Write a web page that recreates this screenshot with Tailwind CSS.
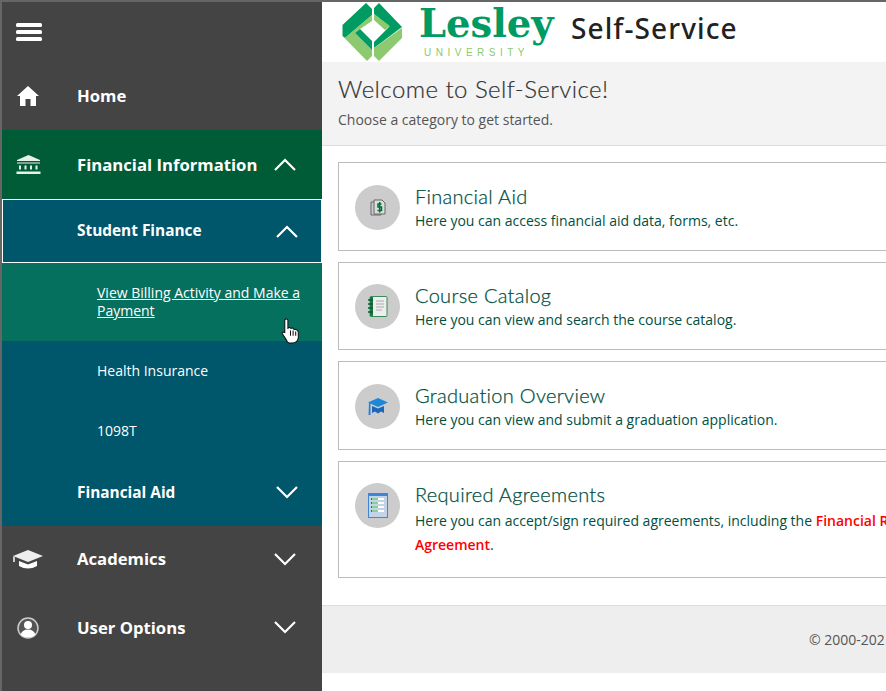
<!DOCTYPE html>
<html>
<head>
 <meta charset="UTF-8">
 <title>Self-Service</title>
 <script src="https://cdn.jsdelivr.net/npm/@tailwindcss/browser@4"></script>
</head>
<body class="font-['Open_Sans',sans-serif] bg-white">
<div class="relative flex w-[886px] h-[691px] overflow-hidden border-t-2 border-l-2 border-[#666]">

 <!-- sidebar -->
 <nav class="w-[320px] shrink-0 flex flex-col bg-[#444] text-white">
  <div class="h-[60px] flex items-center pl-[14px]">
   <svg width="26" height="20" viewBox="0 0 26 20" fill="#fff"><rect y="1" width="26" height="4" rx="1.5"/><rect y="8" width="26" height="4" rx="1.5"/><rect y="15" width="26" height="4" rx="1.5"/></svg>
  </div>
  <a class="h-[68px] flex items-center">
   <span class="w-[75px] pl-[15px]"><svg width="22" height="20" viewBox="0 0 22 20" fill="#fff"><path d="M11 0 L22 10 L19 10 L19 20 L13.5 20 L13.5 13 L8.5 13 L8.5 20 L3 20 L3 10 L0 10 Z"/></svg></span>
   <span class="font-bold text-[16.7px]">Home</span>
  </a>
  <a class="h-[69px] flex items-center bg-[#005c36]">
   <span class="w-[75px] pl-[14px]"><svg width="25" height="20" viewBox="0 0 25 20" fill="#e8f0ea"><path d="M12.5 0 L24 5 L24 6 L1 6 L1 5 Z"/><rect x="1" y="7.500" width="23" height="1"/><rect x="3" y="10.500" width="2" height="4"/><rect x="8.500" y="10.500" width="2" height="4"/><rect x="14" y="10.500" width="2" height="4"/><rect x="19.500" y="10.500" width="2" height="4"/><rect x="0.500" y="16.500" width="24" height="2.500"/></svg></span>
   <span class="font-bold text-[16.7px] flex-1">Financial Information</span>
   <svg class="mr-[26px]" width="22" height="13" viewBox="0 0 22 13" fill="none" stroke="#fff" stroke-width="2.2"><path d="M1 12 L11 2 L21 12"/></svg>
  </a>
  <div class="bg-[#00566a]">
   <a class="h-[64px] flex items-center border border-white pb-[1px]">
    <span class="font-bold text-[15.4px] pl-[74px] flex-1">Student Finance</span>
    <svg class="mr-[23px] mt-[1px]" width="22" height="13" viewBox="0 0 22 13" fill="none" stroke="#fff" stroke-width="2.2"><path d="M1 12 L11 2 L21 12"/></svg>
   </a>
   <a class="h-[78px] flex items-center bg-[#06705f] pl-[95px] pr-[20px] text-[14px] leading-[18px] underline">View Billing Activity and Make a Payment</a>
   <a class="h-[60px] flex items-center pl-[95px] text-[14px] pb-[2px]">Health Insurance</a>
   <a class="h-[60px] flex items-center pl-[95px] text-[14px] pb-[2px]">1098T</a>
   <a class="h-[65px] flex items-center pb-[2px]">
    <span class="font-bold text-[15.4px] pl-[75px] flex-1">Financial Aid</span>
    <svg class="mr-[24px]" width="22" height="13" viewBox="0 0 22 13" fill="none" stroke="#fff" stroke-width="2.2"><path d="M1 1 L11 11 L21 1"/></svg>
   </a>
  </div>
  <a class="h-[68px] flex items-center pb-[2px]">
   <span class="w-[75px] pl-[11px]"><svg width="30" height="19" viewBox="0 0 30 19" fill="#fff"><path d="M15 0 L30 6 L15 12 L0 6 Z" fill="#eee"/><path d="M6 11 L15 14.500 L24 11 L24 16 Q15 21 6 16 Z"/><path d="M0 6 L2 7 L2 12 L0 12 Z" fill="#ccc"/></svg></span>
   <span class="font-bold text-[16.7px] flex-1">Academics</span>
   <svg class="mr-[26px]" width="22" height="13" viewBox="0 0 22 13" fill="none" stroke="#fff" stroke-width="2.2"><path d="M1 1 L11 11 L21 1"/></svg>
  </a>
  <a class="h-[68px] flex items-center">
   <span class="w-[75px] pl-[15px]"><svg width="22" height="22" viewBox="0 0 22 22"><circle cx="11" cy="11" r="10" fill="#555" stroke="#ccc" stroke-width="1.500"/><circle cx="11" cy="8" r="4" fill="#fff"/><path d="M3.500 18 Q5 12.500 11 12.500 Q17 12.500 18.500 18 Q11 23 3.500 18 Z" fill="#fff"/></svg></span>
   <span class="font-bold text-[16.7px] flex-1">User Options</span>
   <svg class="mr-[26px] mb-[2px]" width="22" height="13" viewBox="0 0 22 13" fill="none" stroke="#fff" stroke-width="2.2"><path d="M1 1 L11 11 L21 1"/></svg>
  </a>
 </nav>

 <!-- main column -->
 <main class="w-[700px] shrink-0">
  <header class="h-[60px] flex items-start bg-white">
   <svg class="ml-[16px] shrink-0" width="69" height="62" viewBox="0 2 69 62">
    <path fill="#009a63" d="M4.500 25 L28 3 L34 9 L34 15 L7 38 L4.500 36 Z"/>
    <path fill="#8cc96f" d="M7 38 L34 15 L34 21 L22 29 L17 33 L34 50 L34 56 L29 61 L4.500 36 Z"/>
    <path fill="#009a63" d="M17 33 L22 29 L34 41 L34 50 Z"/>
    <path fill="#009a63" d="M36 8 L41 3 L64 27 L52 27 L36 14 Z"/>
    <path fill="#8cc96f" d="M36 14 L52 26 L47 30 L36 20 Z"/>
    <path fill="#009a63" d="M52 26 L64 27 L36 48 L36 42 Z"/>
    <path fill="#8cc96f" d="M64 28 L64 38 L41 61 L36 56 L36 48 Z"/>
   </svg>
   <div class="w-[151px] ml-[12px] shrink-0">
    <div class="font-['DejaVu_Serif',serif] font-bold text-[38.5px] leading-[40px] text-[#009a63] mt-[2px]">Lesley</div>
    <div class="font-['Liberation_Sans',sans-serif] text-[10px] leading-[10px] tracking-[4.5px] text-[#8cc96f] ml-[5px] mt-[4px]">UNIVERSITY</div>
   </div>
   <div class="ml-[1px] text-[28px] leading-[52px] font-medium tracking-[1.1px] text-[#222] font-['Noto_Sans',sans-serif]">Self-Service</div>
  </header>

  <section class="h-[84px] bg-[#f3f3f3] border-b border-[#ddd] pl-[16px] pt-[11px]">
   <h1 class="font-['Lato',sans-serif] font-light text-[24px] leading-[32px] tracking-[0.45px] text-[#333] [-webkit-text-stroke:0.2px_#333]">Welcome to Self-Service!</h1>
   <p class="text-[14px] leading-[20px] mt-[5px] text-[#555]">Choose a category to get started.</p>
  </section>

  <div class="ml-[16px] mt-[16px] w-[668px] flex flex-col gap-[11px] text-[#00503f]">
   <a class="h-[89px] border border-[#bbb] flex items-start pl-[16px] pt-[22px]">
    <span class="w-[45px] h-[45px] rounded-full bg-[#ccc] flex items-center justify-center shrink-0">
     <svg width="16" height="17" viewBox="0 0 16 17"><path d="M1 3 H11 V16 H1 Z" fill="#ccc" stroke="#666" stroke-width="1"/><path d="M4 1 H12 L15 4 V15 H4 Z" fill="#ddd" stroke="#666" stroke-width="1"/><path d="M11.500 5 H8 V8 H11.500 V11.500 H7.500 M9.700 3 V13.500" fill="none" stroke="#00703c" stroke-width="1.500"/></svg>
    </span>
    <span class="ml-[15px]">
     <span class="block font-['Lato',sans-serif] font-light text-[20px] leading-[26px] tracking-[0.3px] -mt-[2px] [-webkit-text-stroke:0.25px_#00503f]">Financial Aid</span>
     <span class="block text-[14px] leading-[20px] mt-[2px]">Here you can access financial aid data, forms, etc.</span>
    </span>
   </a>
   <a class="h-[88px] border border-[#bbb] flex items-start pl-[16px] pt-[21px]">
    <span class="w-[45px] h-[45px] rounded-full bg-[#ccc] flex items-center justify-center shrink-0">
     <svg width="20" height="21" viewBox="0 0 20 21"><rect x="2" y="0.500" width="17" height="20" rx="1" fill="#eee" stroke="#3a8a5a" stroke-width="1"/><rect x="2" y="1" width="3" height="19" fill="#1a7a45"/><path d="M0 4 H5 M0 8 H5 M0 12 H5 M0 16 H5" stroke="#0a5a30" stroke-width="1.500"/><path d="M8 5 H16 M8 8 H16 M8 11 H16 M8 14 H14" stroke="#aaa" stroke-width="1"/></svg>
    </span>
    <span class="ml-[15px]">
     <span class="block font-['Lato',sans-serif] font-light text-[20px] leading-[26px] tracking-[0.3px] -mt-[2px] [-webkit-text-stroke:0.25px_#00503f]">Course Catalog</span>
     <span class="block text-[14px] leading-[20px] mt-[2px]">Here you can view and search the course catalog.</span>
    </span>
   </a>
   <a class="h-[89px] border border-[#bbb] flex items-start pl-[16px] pt-[22px]">
    <span class="w-[45px] h-[45px] rounded-full bg-[#ccc] flex items-center justify-center shrink-0">
     <svg width="20" height="18" viewBox="0 0 20 18"><path d="M10 0 L20 4.500 L10 9 L0 4.500 Z" fill="#1e88d8"/><path d="M4 8 L10 10.500 L16 8 L16 15 L13 13.500 L10 15.500 L7 13.500 L4 15 Z" fill="#1a66b8"/><path d="M1 5 H2.500 V17 H0.500 Z" fill="#2a7fd0"/></svg>
    </span>
    <span class="ml-[15px]">
     <span class="block font-['Lato',sans-serif] font-light text-[20px] leading-[26px] tracking-[0.3px] -mt-[2px] [-webkit-text-stroke:0.25px_#00503f]">Graduation Overview</span>
     <span class="block text-[14px] leading-[20px] mt-[2px]">Here you can view and submit a graduation application.</span>
    </span>
   </a>
   <a class="h-[117px] border border-[#bbb] flex items-start pl-[16px] pt-[21px]">
    <span class="w-[45px] h-[45px] rounded-full bg-[#ccc] flex items-center justify-center shrink-0">
     <svg width="20" height="25" viewBox="0 0 20 25"><rect x="0.500" y="0.500" width="19" height="24" fill="#c4d4e8" stroke="#3f86d8"/><rect y="0" width="20" height="3" fill="#3f86d8"/><path d="M4 6 H16 M4 10 H16 M4 14 H16 M4 18 H16" stroke="#fff" stroke-width="2"/><path d="M4 6 H10 M4 10 H10 M4 14 H10 M4 18 H10" stroke="#12a02a" stroke-width="1"/><path d="M3 6 H4 M3 10 H4 M3 14 H4 M3 18 H4" stroke="#245" stroke-width="1.500"/></svg>
    </span>
    <span class="ml-[15px]">
     <span class="block font-['Lato',sans-serif] font-light text-[20px] leading-[26px] tracking-[0.3px] -mt-[2px] [-webkit-text-stroke:0.25px_#00503f]">Required Agreements</span>
     <span class="block text-[14px] leading-[24px] mt-[2px]">Here you can accept/sign required agreements, including the <span class="text-[#f00] font-semibold">Financial Responsibility Agreement</span>.</span>
    </span>
   </a>
  </div>

  <footer class="mt-[27px] h-[68px] bg-[#eee] border-t border-[#ddd] pl-[487px] text-[14px] leading-[68px] text-[#555] whitespace-nowrap">© 2000-2021 Ellucian Company L.P. and its affiliates.</footer>
 </main>

 <!-- mouse pointer over the hovered menu item -->
 <svg class="absolute left-[279px] top-[316px]" width="19" height="26" viewBox="0 0 18 25"><path d="M3.500 1.500 Q5.500 0 6.500 2 L6.500 10 L8 9 L9.500 10 L11 9.500 L12.500 11 L14.500 11 Q16.500 12 16.500 14 L16.500 19 Q15.500 24 11 24 L8 24 Q6 24 5 21 L1 15 Q0.500 13 3.500 14 L3.500 2 Z" fill="#fff" stroke="#111" stroke-width="1"/><path d="M9 12 V17 M11.500 12 V17 M14 13 V17" stroke="#111" stroke-width="1"/></svg>
</div>
</body>
</html>
